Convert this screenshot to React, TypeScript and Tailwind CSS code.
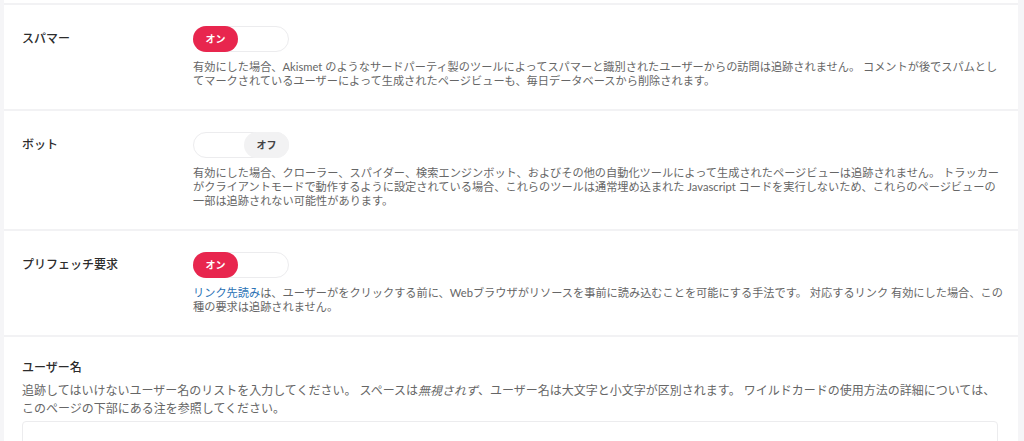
import React from "react";

const font = { fontFamily: 'Lato, "Noto Sans CJK JP", sans-serif' };

function Toggle({ on }: { on: boolean }) {
  return (
    <div className="flex h-[26px] w-[96px] items-center rounded-full border border-[#ececee] bg-white">
      {on ? (
        <span className="flex h-[26px] w-[45px] -ml-px items-center justify-center rounded-full bg-[#e8264e] text-[10px] font-bold text-white">
          オン
        </span>
      ) : (
        <span className="ml-auto -mr-px flex h-[26px] w-[45px] items-center justify-center rounded-full bg-[#f2f2f3] text-[10px] font-bold text-[#444]">
          オフ
        </span>
      )}
    </div>
  );
}

function ToggleRow({
  label,
  on,
  children,
}: {
  label: string;
  on: boolean;
  children: React.ReactNode;
}) {
  return (
    <div className="flex border-b-2 border-[#f2f2f4] pt-[21px] pb-[21px] pl-[18px] pr-[13px]">
      <div className="w-[171px] shrink-0 pt-[4px] text-[12px] font-medium leading-[18px] text-[#2c2c2c]">
        {label}
      </div>
      <div className="flex-1">
        <Toggle on={on} />
        <p className="mt-[8px] text-[11.2px] leading-[14px] text-[#666]">{children}</p>
      </div>
    </div>
  );
}

export default function App() {
  return (
    <div className="h-[441px] overflow-hidden bg-[#f5f5f7] pl-[4px] pr-[6px]" style={font}>
      <div className="bg-white">
        <div className="h-[5px] border-b-2 border-[#f2f2f4]" />

        <ToggleRow label="スパマー" on={true}>
          有効にした場合、Akismet のようなサードパーティ製のツールによってスパマーと識別されたユーザーからの訪問は追跡されません。 コメントが後でスパムとしてマークされているユーザーによって生成されたページビューも、毎日データベースから削除されます。
        </ToggleRow>

        <ToggleRow label="ボット" on={false}>
          有効にした場合、クローラー、スパイダー、検索エンジンボット、およびその他の自動化ツールによって生成されたページビューは追跡されません。 トラッカーがクライアントモードで動作するように設定されている場合、これらのツールは通常埋め込まれた Javascript コードを実行しないため、これらのページビューの一部は追跡されない可能性があります。
        </ToggleRow>

        <ToggleRow label="プリフェッチ要求" on={true}>
          <a href="#" className="text-[#2a72b5]">
            リンク先読み
          </a>
          は、ユーザーがをクリックする前に、Webブラウザがリソースを事前に読み込むことを可能にする手法です。 対応するリンク 有効にした場合、この種の要求は追跡されません。
        </ToggleRow>

        <div className="pt-[22px] pl-[18px] pr-[20px]">
          <div className="text-[12px] font-medium leading-[18px] text-[#2c2c2c]">ユーザー名</div>
          <p className="mt-[5px] text-[12px] leading-[18px] text-[#666]">
            追跡してはいけないユーザー名のリストを入力してください。 スペースは<em>無視されず</em>、ユーザー名は大文字と小文字が区別されます。 ワイルドカードの使用方法の詳細については、このページの下部にある注を参照してください。
          </p>
          <textarea className="mt-[3px] block h-[80px] w-full resize-none rounded-[4px] border border-[#ececee] bg-white" />
        </div>
      </div>
    </div>
  );
}
